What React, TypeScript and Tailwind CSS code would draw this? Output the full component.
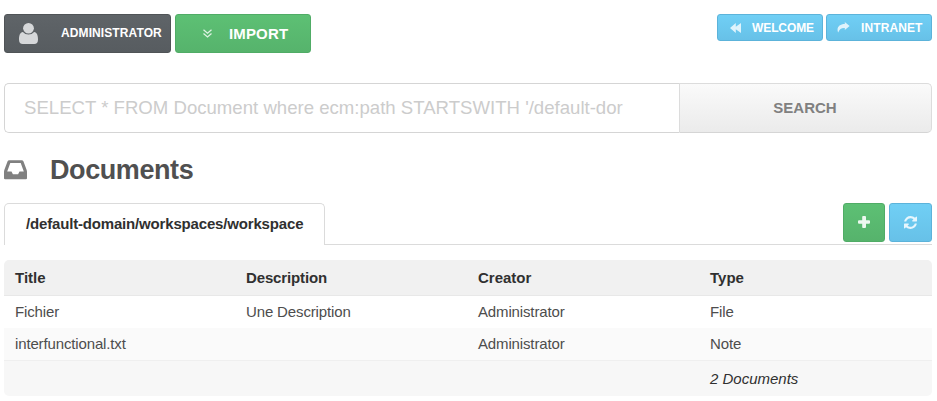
import React from "react";

const blue =
  "flex items-center rounded-[3px] border border-[#5cb3da] bg-linear-to-b from-[#70cff5] to-[#67c1e8] text-white";
const green =
  "flex items-center rounded-[3px] border border-[#50ac66] bg-linear-to-b from-[#5dc074] to-[#56b36c] text-white";

const columns = [
  { name: "Title", tracking: "" },
  { name: "Description", tracking: "tracking-[-0.14px]" },
  { name: "Creator", tracking: "" },
  { name: "Type", tracking: "" },
];
const documents = [
  ["Fichier", "Une Description", "Administrator", "File"],
  ["interfunctional.txt", "", "Administrator", "Note"],
];

function UserIcon() {
  return (
    <svg width="19" height="21" viewBox="0 0 19 21" fill="#d6d8da">
      <ellipse cx="9.5" cy="5.3" rx="5.4" ry="5.3" />
      <path d="M3.9 9C1 9.3 0 12.5 0 16.5C0 19.500 1.300 21 3.800 21H15.200C17.700 21 19 19.500 19 16.500C19 12.500 18 9.300 15.100 9C13.600 10.700 11.800 11.500 9.500 11.500C7.200 11.500 5.400 10.700 3.900 9Z" />
    </svg>
  );
}

function ChevronsIcon() {
  return (
    <svg width="9" height="9" viewBox="0 0 9 9" fill="none" stroke="#dff2e3" strokeWidth="1.25">
      <path d="M.5 .8L4.5 4.2L8.5 .8M.5 4.6L4.5 8L8.5 4.6" />
    </svg>
  );
}

function RewindIcon() {
  return (
    <svg width="12" height="10" viewBox="0 0 12 10" fill="#dff3fc">
      <path d="M5.800 0V3.700L11 0V10L5.800 6.300V10L0 5Z" />
    </svg>
  );
}

function ForwardIcon() {
  return (
    <svg width="13" height="11" viewBox="0 0 13 11" fill="#dff3fc">
      <path d="M7.800 0L12.600 4L7.800 8V5.900C4.400 5.700 2.500 7 1.200 10.600C-.9 5.700 2.200 2 7.800 2Z" />
    </svg>
  );
}

function InboxIcon() {
  return (
    <svg width="23" height="20" viewBox="0 0 23 20" fill="#808080" fillRule="evenodd">
      <path d="M5.200 .2H17.800Q18.900 .2 19.400 1.200L22.500 9.400Q23 10.600 23 11.700V18.200Q23 19.300 21.900 19.300H1.100Q0 19.300 0 18.200V11.700Q0 10.600 .5 9.400L3.600 1.200Q4.100 .2 5.200 .2ZM3.200 11.500H7.500L8.900 14.200H14.100L15.500 11.500H19.800L16.700 3H6.300Z" />
    </svg>
  );
}

function PlusIcon() {
  return (
    <svg className="mb-0.5" width="12" height="12" viewBox="0 0 12 12" fill="#ecf8ef">
      <path d="M5 0H7Q8 0 8 1V4.200H11Q12 4.200 12 5.200V6.800Q12 7.800 11 7.800H8V11Q8 12 7 12H5Q4.200 12 4.200 11V7.800H1Q0 7.800 0 6.800V5.200Q0 4.200 1 4.200H4.200V1Q4.200 0 5 0Z" />
    </svg>
  );
}

function RefreshIcon() {
  return (
    <svg width="13" height="13" viewBox="0 0 1536 1536" fill="#e6f6fd">
      <path d="M1511 928q0 5-1 7-64 268-268 434.500T764 1536q-146 0-282.500-55T238 1324l-129 129q-19 19-45 19t-45-19-19-45V960q0-26 19-45t45-19h448q26 0 45 19t19 45-19 45l-137 137q71 66 161 102t187 36q134 0 250-65t186-179q11-17 53-117 8-23 30-23h192q13 0 22.500 9.500t9.500 22.500zm25-800v448q0 26-19 45t-45 19h-448q-26 0-45-19t-19-45 19-45l138-138Q969 256 768 256q-134 0-250 65T332 500q-11 17-53 117-8 23-30 23H50q-13 0-22.500-9.500T18 608v-7q65-268 270-434.500T768 0q146 0 284 55.500T1297 212l130-129q19-19 45-19t45 19 19 45z" />
    </svg>
  );
}

export default function App() {
  return (
    <div className="h-[401px] w-[937px] overflow-hidden bg-white pt-3.5 pr-[5px] pl-1 font-['Liberation_Sans',Arial,sans-serif] text-[15px] text-[#4d4d4d]">
      <header className="flex h-[39px] items-start justify-between">
        <div className="flex gap-1">
          <button className="flex h-[39px] w-[167px] items-center rounded-[3px] border border-[#505457] bg-linear-to-b from-[#5f6468] to-[#575c60] pl-3.5 text-white">
            <UserIcon />
            <span className="-mt-0.5 ml-[23px] text-[12px] font-bold tracking-[0.1px] whitespace-nowrap">ADMINISTRATOR</span>
          </button>
          <button className={`${green} h-[39px] w-[136px] pl-[27px]`}>
            <ChevronsIcon />
            <span className="ml-[17px] pt-px text-[15px] font-bold tracking-[0.15px]">IMPORT</span>
          </button>
        </div>
        <nav className="flex gap-[3px]">
          <button className={`${blue} h-[27px] w-[106px] pl-3`}>
            <RewindIcon />
            <span className="ml-2.5 text-[12px] font-bold tracking-[-0.1px]">WELCOME</span>
          </button>
          <button className={`${blue} h-[27px] w-[106px] pl-2.5`}>
            <ForwardIcon />
            <span className="ml-[11px] text-[12px] font-bold tracking-[0.1px]">INTRANET</span>
          </button>
        </nav>
      </header>

      <form className="mt-[30px] flex h-[50px]">
        <input
          className="w-[675px] rounded-l-[5px] border border-r-0 border-[#d5d5d5] bg-white pr-[45px] pl-[19px] text-[18.6px] placeholder:text-[#cccccc] placeholder:opacity-100"
          placeholder="SELECT * FROM Document where ecm:path STARTSWITH '/default-dor"
        />
        <button
          type="button"
          className="flex-1 rounded-r-[5px] border border-[#dcdcdc] border-b-[#d5d5d5] bg-linear-to-b from-[#fafafa] to-[#ebebeb] pr-px text-[15px] font-bold text-[#808080]"
        >
          SEARCH
        </button>
      </form>

      <div className="mt-5 flex h-[34px] items-center">
        <InboxIcon />
        <h1 className="ml-[23px] text-[27px] leading-[34px] font-bold tracking-[-0.42px] text-[#505050]">Documents</h1>
      </div>

      <div className="mt-4 flex h-[42px] justify-between border-b border-[#dbdbdb]">
        <div className="-mb-px flex h-[42px] w-[321px] items-center rounded-t-[5px] border border-b-0 border-[#dbdbdb] bg-white pl-[21px] font-bold tracking-[-0.17px] text-[#303030]">
          /default-domain/workspaces/workspace
        </div>
        <div className="flex gap-1">
          <button className={`${green} h-[39px] w-[42px] justify-center`}>
            <PlusIcon />
          </button>
          <button className={`${blue} h-[39px] w-[43px] justify-center`}>
            <RefreshIcon />
          </button>
        </div>
      </div>

      <div className="mt-[15px] overflow-hidden rounded-[5px]">
        <div className="grid h-9 grid-cols-[231px_232px_232px_1fr] items-center border-b border-[#e8e8e8] bg-[#f1f1f1] pt-0.5 pl-[11px] font-bold text-[#303030]">
          {columns.map(({ name, tracking }) => (
            <span key={name} className={tracking}>{name}</span>
          ))}
        </div>
        {documents.map((row) => (
          <div
            key={row[0]}
            className="grid h-8 grid-cols-[231px_232px_232px_1fr] items-center pl-[11px] tracking-[-0.14px] even:bg-white odd:bg-[#fafafa]"
          >
            {row.map((cell, i) => (
              <span key={i}>{cell}</span>
            ))}
          </div>
        ))}
        <div className="grid h-9 grid-cols-[231px_232px_232px_1fr] items-center border-t border-[#efefef] bg-[#f7f7f7] pt-0.5 pl-[11px] text-[#303030] italic">
          <span className="col-start-4">2 Documents</span>
        </div>
      </div>
    </div>
  );
}
